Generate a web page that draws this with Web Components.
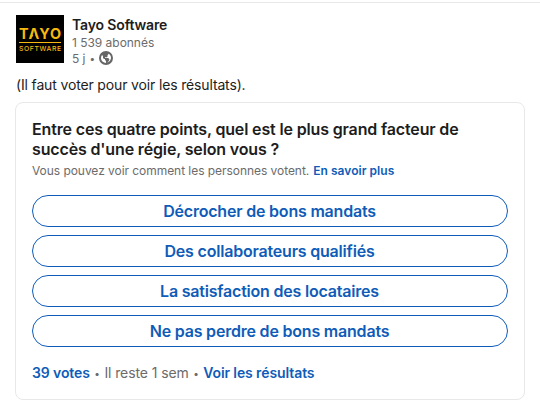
<!DOCTYPE html>
<html lang="fr">
<head>
<meta charset="utf-8" />
<title>Tayo Software</title>
<style>
  :root {
    --clr-text: #1d1d1d;
    --clr-muted: #6b6b6b;
    --clr-link: #0f5cb8;
    --clr-border: #e8e8e8;
  }
  body {
    margin: 0;
    background: #fff;
    color: var(--clr-text);
    font-family: Inter, "Liberation Sans", sans-serif;
  }
</style>
</head>
<body>
<feed-post>
  <post-author slot="author">
    <span slot="name">Tayo Software</span>
    <span slot="followers">1 539 abonnés</span>
    <span slot="age">5 j</span>
  </post-author>
  <span slot="text">(Il faut voter pour voir les résultats).</span>
  <poll-card>
    <span slot="question">Entre ces quatre points, quel est le plus grand facteur de<br />succès d'une régie, selon vous ?</span>
    <span slot="note">Vous pouvez voir comment les personnes votent.</span>
    <span slot="more">En savoir plus</span>
    <poll-option>Décrocher de bons mandats</poll-option>
    <poll-option>Des collaborateurs qualifiés</poll-option>
    <poll-option>La satisfaction des locataires</poll-option>
    <poll-option>Ne pas perdre de bons mandats</poll-option>
    <span slot="votes">39 votes</span>
    <span slot="remaining">Il reste 1 sem</span>
    <span slot="results">Voir les résultats</span>
  </poll-card>
</feed-post>

<template id="feed-post">
  <style>
    :host {
      display: block;
      box-sizing: border-box;
      height: 405px;
      margin-top: 2px;
      padding: 12px 15px 0;
      border-top: 1px solid var(--clr-border);
    }
    .text {
      margin: 12px 0 7px;
      padding-left: 1px;
      font-size: 14px;
      line-height: 20px;
      letter-spacing: -0.15px;
    }
  </style>
  <slot name="author"></slot>
  <p class="text"><slot name="text"></slot></p>
  <slot></slot>
</template>

<template id="post-author">
  <style>
    :host {
      display: flex;
      gap: 8px;
      height: 48px;
      padding-left: 1px;
    }
    .logo {
      display: block;
      width: 48px;
      height: 48px;
    }
    .name {
      height: 19px;
      font-size: 14px;
      font-weight: 600;
      line-height: 20px;
      letter-spacing: -0.15px;
    }
    .meta {
      display: flex;
      align-items: center;
      height: 16px;
      color: var(--clr-muted);
      font-size: 12px;
      letter-spacing: -0.03px;
    }
    .dot {
      margin: 0 3px 0 4px;
      font-size: 10px;
    }
  </style>
  <svg class="logo" viewBox="0 0 48 48">
    <rect width="48" height="48" fill="#000" />
    <g fill="#f5b90f" font-family="Inter, sans-serif">
      <text x="3" y="24" font-size="14.5" font-weight="700" textLength="42" lengthAdjust="spacingAndGlyphs" style="font-kerning: none">TAYO</text>
      <rect x="3" y="27" width="42" height="1" />
      <text x="3" y="35.7" font-size="6.8" font-weight="500" textLength="42" lengthAdjust="spacing">SOFTWARE</text>
    </g>
    <!-- opens the crossbar of the A -->
    <path d="M18.2 17.5 L20.7 24.2 H15.7 Z" fill="#000" />
  </svg>
  <div>
    <div class="name"><slot name="name"></slot></div>
    <div class="meta"><slot name="followers"></slot></div>
    <div class="meta">
      <slot name="age"></slot><span class="dot">•</span>
      <svg width="16" height="16" viewBox="0 0 16 16" fill="#666">
        <path d="M8 1a7 7 0 107 7 7 7 0 00-7-7zM3 8a5 5 0 011-3l.55.55A1.5 1.5 0 015 6.620v1.070a.75.75 0 00.22.53l.56.56a.75.75 0 00.53.22H7v.69a.75.75 0 00.22.53l.56.56a.75.75 0 01.22.53V13a5 5 0 01-5-5zm6.240 4.830l2-2.460a.75.75 0 00.09-.8l-.58-1.160A.76.76 0 0010 8H7v-.19a.51.51 0 01.28-.45l.38-.19a.74.74 0 01.68 0L9 7.500l.38-.7a1 1 0 00.12-.48v-.85a.78.78 0 01.21-.53l1.070-1.090a5 5 0 01-1.540 8.980z" />
      </svg>
    </div>
  </div>
</template>

<template id="poll-card">
  <style>
    :host {
      display: block;
      box-sizing: border-box;
      height: 298px;
      padding: 16px 16px 0;
      border: 1px solid var(--clr-border);
      border-radius: 8px;
    }
    .question {
      margin: 0;
      font-size: 16px;
      font-weight: 600;
      line-height: 20px;
      letter-spacing: -0.15px;
    }
    .note {
      display: flex;
      gap: 4px;
      margin: 4px 0 16px;
      color: var(--clr-muted);
      font-size: 12px;
      line-height: 16px;
      letter-spacing: -0.05px;
    }
    .link {
      color: var(--clr-link);
      font-weight: 600;
    }
    .note .link {
      letter-spacing: 0.04px;
    }
    .options {
      display: grid;
      gap: 8px;
    }
    .footer {
      display: flex;
      margin-top: 16px;
      color: var(--clr-muted);
      font-size: 14px;
      line-height: 20px;
      letter-spacing: -0.1px;
    }
    .dot {
      margin: 0 4.5px;
      font-size: 10px;
    }
  </style>
  <h2 class="question"><slot name="question"></slot></h2>
  <div class="note">
    <slot name="note"></slot>
    <span class="link"><slot name="more"></slot></span>
  </div>
  <div class="options"><slot></slot></div>
  <div class="footer">
    <span class="link"><slot name="votes"></slot></span>
    <span class="dot">•</span>
    <slot name="remaining"></slot>
    <span class="dot">•</span>
    <span class="link"><slot name="results"></slot></span>
  </div>
</template>

<template id="poll-option">
  <style>
    :host {
      display: block;
    }
    button {
      display: block;
      box-sizing: border-box;
      width: 100%;
      height: 32px;
      padding: 0 1px 0 0;
      border: 1px solid var(--clr-link);
      border-radius: 16px;
      background: transparent;
      color: var(--clr-link);
      font-family: inherit;
      font-size: 16px;
      font-weight: 600;
      line-height: 30px;
      letter-spacing: -0.2px;
      cursor: pointer;
    }
  </style>
  <button><slot></slot></button>
</template>

<script>
  class TemplateElement extends HTMLElement {
    constructor() {
      super();
      const template = document.getElementById(this.localName);
      this.attachShadow({ mode: "open" });
      this.shadowRoot.appendChild(template.content.cloneNode(true));
    }
  }
  class FeedPost extends TemplateElement {}
  class PostAuthor extends TemplateElement {}
  class PollCard extends TemplateElement {}
  class PollOption extends TemplateElement {}

  window.customElements.define("feed-post", FeedPost);
  window.customElements.define("post-author", PostAuthor);
  window.customElements.define("poll-card", PollCard);
  window.customElements.define("poll-option", PollOption);
</script>
</body>
</html>
